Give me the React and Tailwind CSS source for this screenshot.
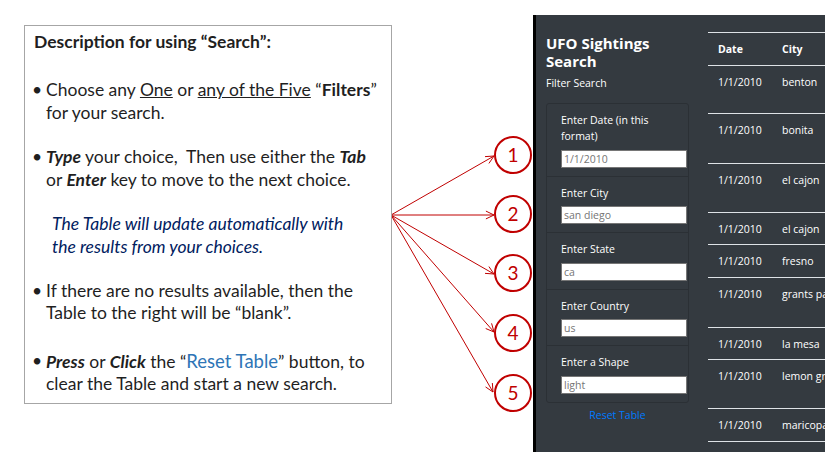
import React from 'react';

const RED = '#c00000';
const ORIGIN = [391, 215];
const TARGETS = [
  { n: '1', tip: [494, 156], c: [513, 155] },
  { n: '2', tip: [494, 215], c: [513, 214] },
  { n: '3', tip: [494, 274], c: [513, 273] },
  { n: '4', tip: [494, 332], c: [513, 333] },
  { n: '5', tip: [493, 392], c: [513, 393] },
];

const arrowHead = ([x0, y0], [x1, y1]) => {
  const a = Math.atan2(y1 - y0, x1 - x0);
  const len = 9;
  const spread = 0.45;
  const p1 = [x1 - len * Math.cos(a - spread), y1 - len * Math.sin(a - spread)];
  const p2 = [x1 - len * Math.cos(a + spread), y1 - len * Math.sin(a + spread)];
  return `M${p1[0]} ${p1[1]} L${x1} ${y1} L${p2[0]} ${p2[1]}`;
};

const Arrows = () => (
  <svg className="w-[141px] h-[459px] shrink-0" viewBox="392 0 141 459">
    {TARGETS.map((t) => (
      <g key={t.n}>
        <line x1={ORIGIN[0]} y1={ORIGIN[1]} x2={t.tip[0]} y2={t.tip[1]} stroke={RED} strokeWidth="1" />
        <path d={arrowHead(ORIGIN, t.tip)} fill="none" stroke={RED} strokeWidth="1" />
        <circle cx={t.c[0]} cy={t.c[1]} r="18" fill="white" stroke={RED} strokeWidth="2" />
        <text
          x={t.c[0]}
          y={t.c[1] + 6.5}
          textAnchor="middle"
          fontSize="19"
          fontFamily="Lato, sans-serif"
          fill={RED}
        >
          {t.n}
        </text>
      </g>
    ))}
  </svg>
);

const Bullet = ({ children, className = '' }) => (
  <div className={`flex pl-[7px] ${className}`}>
    <span className="w-[14px] shrink-0">•</span>
    <div className="whitespace-nowrap">{children}</div>
  </div>
);

const Description = () => (
  <div className="ml-[24px] mt-[25px] w-[368px] h-[379px] shrink-0 border border-[#a6a6a6] bg-white pt-[5px] font-['Lato',sans-serif] text-[17.5px] leading-[22.5px] text-[#1f1f1f]">
    <div className="pl-[9px] font-bold">Description for using “Search”:</div>
    <Bullet className="mt-[25.5px]">
      Choose any <span className="underline">One</span> or{' '}
      <span className="underline">any of the Five</span> “<b>Filters</b>”
      <br />
      for your search.
    </Bullet>
    <Bullet className="mt-[22px]">
      <b>
        <i>Type</i>
      </b>{' '}
      your choice,&nbsp; Then use either the{' '}
      <b>
        <i>Tab</i>
      </b>
      <br />
      or{' '}
      <b>
        <i>Enter</i>
      </b>{' '}
      key to move to the next choice.
    </Bullet>
    <div className="mt-[22px] pl-[27px] italic text-[#002060] whitespace-nowrap">
      The Table will update automatically with
      <br />
      the results from your choices.
    </div>
    <Bullet className="mt-[21.5px]">
      If there are no results available, then the
      <br />
      Table to the right will be “blank”.
    </Bullet>
    <Bullet className="mt-[25px]">
      <b>
        <i>Press</i>
      </b>{' '}
      or{' '}
      <b>
        <i>Click</i>
      </b>{' '}
      the “<span className="text-[#2e75b6] text-[18.5px]">Reset Table</span>” button, to
      <br />
      clear the Table and start a new search.
    </Bullet>
  </div>
);

const filters = [
  { label: <>Enter Date (in this<br />format)</>, value: '1/1/2010' },
  { label: 'Enter City', value: 'san diego' },
  { label: 'Enter State', value: 'ca' },
  { label: 'Enter Country', value: 'us' },
  { label: 'Enter a Shape', value: 'light' },
];

const rows = [
  { city: 'benton', h: 'h-[48px]' },
  { city: 'bonita', h: 'h-[50px]' },
  { city: 'el cajon', h: 'h-[49px]' },
  { city: 'el cajon', h: 'h-[32px]' },
  { city: 'fresno', h: 'h-[33px]' },
  { city: 'grants pass', h: 'h-[50px]' },
  { city: 'la mesa', h: 'h-[32px]' },
  { city: 'lemon grove', h: 'h-[49px]' },
  { city: 'maricopa', h: 'h-[33px]' },
];

const Panel = () => (
  <div className="mt-[15px] h-[437px] flex-1 min-w-0 flex overflow-hidden border-l-[3px] border-black bg-[#343a40] font-['Open_Sans',sans-serif] text-white">
    <div className="w-[162px] shrink-0 pl-[10px] pt-[19px]">
      <div className="text-[15px] leading-[18px] font-bold">
        UFO Sightings
        <br />
        Search
      </div>
      <div className="mt-[5px] text-[10.5px] leading-[16.5px]">Filter Search</div>
      <div className="mt-[11px] w-[143px] rounded-[3px] border border-[#2b3035]">
        {filters.map((f, i) => (
          <div
            key={i}
            className={`pl-[14px] pr-[1px] pt-[8px] pb-[8px] ${i < filters.length - 1 ? 'border-b border-[#2b3035]' : ''}`}
          >
            <div className="text-[10.5px] leading-[16.5px] mb-[5px]">{f.label}</div>
            <input
              readOnly
              placeholder={f.value}
              className="block w-[126px] h-[18px] border border-[#767676] bg-white px-[2px] text-[10.5px] text-[#757575] placeholder:text-[#757575] outline-none"
            />
          </div>
        ))}
      </div>
      <div className="mt-[4px] w-[143px] text-center text-[10.5px] leading-[16.5px] text-[#007bff]">
        Reset Table
      </div>
    </div>
    <div className="flex-1 min-w-0 pl-[10px] pt-[17px] text-[10.5px] leading-[16px]">
      <div className="flex h-[34px] items-center border-y border-[#dee2e6] font-bold">
        <div className="w-[64px] shrink-0 pl-[10px]">Date</div>
        <div className="pl-[10px] whitespace-nowrap">City</div>
      </div>
      {rows.map((r, i) => (
        <div key={i} className={`flex ${r.h} pt-[8px] border-b border-[#dee2e6]`}>
          <div className="w-[64px] shrink-0 pl-[10px]">1/1/2010</div>
          <div className="pl-[10px] whitespace-nowrap">{r.city}</div>
        </div>
      ))}
    </div>
  </div>
);

export default function App() {
  return (
    <div className="w-[825px] h-[459px] bg-white flex items-start overflow-hidden">
      <Description />
      <Arrows />
      <Panel />
    </div>
  );
}
